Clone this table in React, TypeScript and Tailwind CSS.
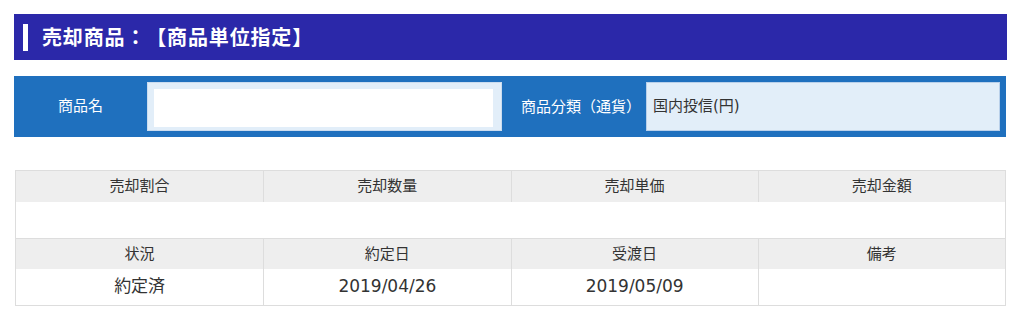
const FONT = "font-['DejaVu_Sans','Noto_Sans_CJK_JP',sans-serif] [text-spacing-trim:space-all]";

const TOP_HEADERS = ["売却割合", "売却数量", "売却単価", "売却金額"];
const BOTTOM_HEADERS = ["状況", "約定日", "受渡日", "備考"];
const BOTTOM_VALUES = ["約定済", "2019/04/26", "2019/05/09", ""];

function HeaderRow({ labels, first }: { labels: string[]; first?: boolean }) {
  return (
    <div className={`grid grid-cols-4 bg-[#eeeeee] h-[31px] ${first ? "" : "border-t border-[#dddddd]"}`}>
      {labels.map((label, i) => (
        <div
          key={label}
          className={`flex items-center justify-center text-[15px] text-[#333333] ${i > 0 ? "border-l border-[#dddddd]" : ""}`}
        >
          {label}
        </div>
      ))}
    </div>
  );
}

export default function App() {
  return (
    <div className={`min-h-screen bg-white ${FONT}`}>
      <div className="w-[993px] ml-[14px] pt-[14px]">
        {/* Section title */}
        <div className="h-[46px] bg-[#2b28a9] flex items-center">
          <div className="ml-[9px] w-[5px] h-[27px] bg-white" />
          <h2 className="ml-[14px] text-[20px] font-bold text-white font-['Noto_Sans_CJK_JP',sans-serif] tracking-[0.85px]">
            売却商品：【商品単位指定】
          </h2>
        </div>

        {/* Product info panel */}
        <div className="mt-[16px] w-[992px] bg-[#1f70be] flex py-[6px] pr-[6px]">
          <div className="w-[133px] flex items-center justify-center text-[15px] text-white">商品名</div>
          <div className="w-[355px] h-[49px] bg-[#e2eef9] border border-[#cbdcef] pt-[6px] pl-[6px] pr-[8px] pb-[3px]">
            <input className="w-full h-full bg-white outline-none px-2 text-[15px]" />
          </div>
          <div className="w-[144px] flex items-center justify-center pl-[14px] text-[15px] text-white font-['Noto_Sans_CJK_JP',sans-serif]">
            商品分類（通貨）
          </div>
          <div className="flex-1 h-[49px] bg-[#e2eef9] border border-[#b9d0ea] flex items-center pl-[6px] text-[15px] text-[#333333]">
            国内投信(円)
          </div>
        </div>

        {/* Sale details */}
        <div className="mt-[33px] ml-px w-[991px] border border-[#dddddd]">
          <HeaderRow labels={TOP_HEADERS} first />
          <div className="h-[36px] bg-white" />
          <HeaderRow labels={BOTTOM_HEADERS} />
          <div className="grid grid-cols-4 h-[36px] bg-white">
            {BOTTOM_VALUES.map((value, i) => (
              <div
                key={i}
                className={`flex items-center justify-center text-[17px] text-[#333333] ${i > 0 ? "border-l border-[#dddddd]" : ""}`}
              >
                {value}
              </div>
            ))}
          </div>
        </div>
      </div>
    </div>
  );
}
